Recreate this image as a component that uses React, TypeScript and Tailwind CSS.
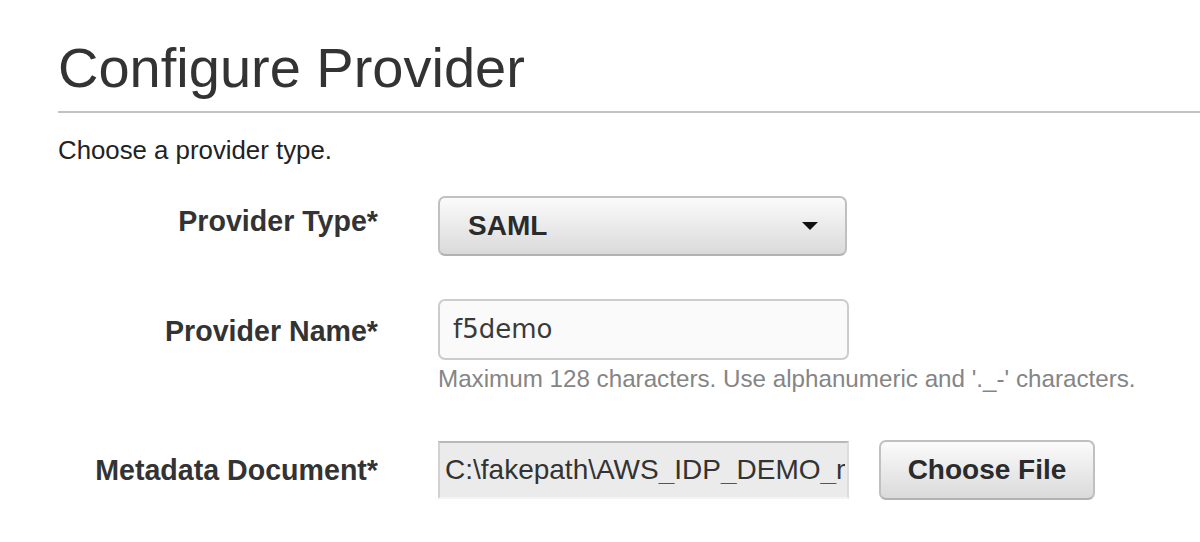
import { ChangeEvent, useState } from "react";

const labelCls =
  "w-[320px] shrink-0 text-right text-[28.6px] leading-none font-bold text-[#333333]";

const App = () => {
  const [name, setName] = useState("f5demo");

  return (
    <div className="min-h-screen w-full bg-white font-['Liberation_Sans',Arial,sans-serif] text-[#333333]">
      <div className="pl-[58px] pt-[40px]">
        <h1 className="border-b-2 border-[#c2c2c2] pb-[15px] text-[56px] leading-none font-normal text-[#333333]">
          Configure Provider
        </h1>

        <p className="mt-[25px] text-[25.8px] leading-none text-[#222222]">
          Choose a provider type.
        </p>

        {/* provider type */}
        <div className="mt-[32px] flex items-center gap-[60px]">
          <div className={labelCls + " -mt-[10px]"}>Provider Type*</div>
          <button
            type="button"
            className="flex h-[60px] w-[409px] items-center justify-between rounded-[7px] border-2 border-[#c0c0c0] border-b-[#b2b2b2] bg-linear-to-b from-[#fbfbfb] to-[#dadada] pr-[27px] pl-[28px] text-[28px] leading-none font-bold text-[#2b2b2b]"
          >
            <span>SAML</span>
            <svg width="16" height="8" viewBox="0 0 16 8">
              <polygon points="0,0 16,0 8,8" fill="#111111" />
            </svg>
          </button>
        </div>

        {/* provider name */}
        <div className="mt-[43px] flex items-start gap-[60px]">
          <div className={labelCls + " pt-[18px]"}>Provider Name*</div>
          <div className="flex flex-col">
            <input
              value={name}
              onChange={(e: ChangeEvent<HTMLInputElement>) => setName(e.target.value)}
              className="h-[61px] w-[411px] rounded-[7px] border-2 border-[#cccccc] bg-[#fafafa] px-[13px] font-['DejaVu_Sans',Verdana,sans-serif] text-[26px] text-[#3a3a3a] outline-none"
            />
            <p className="mt-[7px] text-[24.2px] leading-none whitespace-nowrap text-[#858585]">
              Maximum 128 characters. Use alphanumeric and '._-' characters.
            </p>
          </div>
        </div>

        {/* metadata document */}
        <div className="mt-[49px] flex items-center gap-[60px]">
          <div className={labelCls}>Metadata Document*</div>
          <div className="flex items-center gap-[30px]">
            <div className="flex h-[58px] w-[411px] items-center overflow-hidden border-2 border-t-[#b9b9b9] border-r-[#dddddd] border-b-[#f4f4f4] border-l-[#d2d2d2] bg-[#ebebeb] pl-[5px]">
              <span className="block w-[400px] overflow-hidden text-[28px] leading-none whitespace-nowrap text-[#333333]">
                C:\fakepath\AWS_IDP_DEMO_metadata.xml
              </span>
            </div>
            <button
              type="button"
              className="h-[60px] w-[216px] rounded-[7px] border-2 border-[#c0c0c0] border-b-[#b2b2b2] bg-linear-to-b from-[#fbfbfb] to-[#dadada] text-[28px] leading-none font-bold text-[#2b2b2b]"
            >
              Choose File
            </button>
          </div>
        </div>
      </div>
    </div>
  );
};

export default App;
